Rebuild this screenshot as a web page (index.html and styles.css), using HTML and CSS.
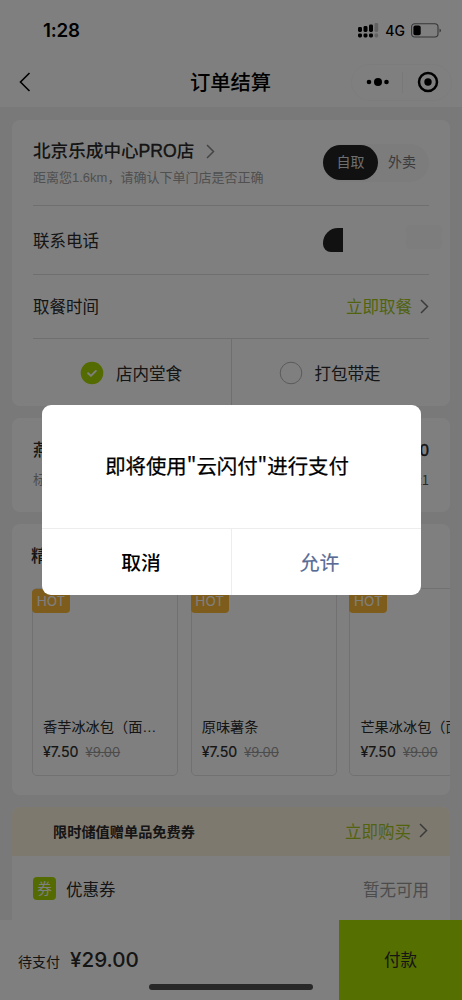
FILE: index.html
```html
<!DOCTYPE html>
<html lang="zh-CN">
<head>
<meta charset="utf-8">
<title>订单结算</title>
<link rel="stylesheet" href="styles.css">
</head>
<body>
<div class="screen">
  <header class="top">
    <div class="status">
      <span class="time">1:28</span>
      <div class="status-right">
        <svg class="signal" width="21" height="15" viewBox="0 0 21 15">
          <g fill="#000"><rect x="0" y="4" width="4" height="5" rx="1.4"/><rect x="5.5" y="3" width="4" height="6" rx="1.4"/><rect x="11" y="1.5" width="4" height="7.5" rx="1.4"/><rect x="0" y="10.5" width="4" height="4" rx="1.4"/><rect x="5.5" y="10.5" width="4" height="4" rx="1.4"/><rect x="11" y="10.5" width="4" height="4" rx="1.4"/></g>
          <g fill="#c4c4c4"><rect x="16.5" y="0" width="3.7" height="9" rx="1.4"/><rect x="16.5" y="10.5" width="3.7" height="4" rx="1.4"/></g>
        </svg>
        <span class="net">4G</span>
        <svg width="31" height="15" viewBox="0 0 31 15"><rect x=".6" y=".8" width="26.4" height="13.2" rx="3.2" fill="none" stroke="#6c6c6c" stroke-width="1.1"/><rect x="2.4" y="2.6" width="7.3" height="9.7" rx="1.8" fill="#000"/><path d="M28.5 5.5q1.4.6 1.4 2t-1.4 2z" fill="#6c6c6c"/></svg>
      </div>
    </div>
    <div class="nav">
      <svg class="back" width="12" height="20" viewBox="0 0 12 20"><path d="M10.5 1 1.5 10l9 9" fill="none" stroke="#000" stroke-width="1.6"/></svg>
      <h1>订单结算</h1>
      <div class="capsule">
        <svg width="24" height="10" viewBox="0 0 24 10"><circle cx="3" cy="5" r="2.3"/><circle cx="12" cy="5" r="4"/><circle cx="20.5" cy="5" r="2.3"/></svg>
        <i></i>
        <svg width="22" height="22" viewBox="0 0 22 22"><circle cx="11" cy="11" r="9" fill="none" stroke="#000" stroke-width="2.5"/><circle cx="11" cy="11" r="3.7"/></svg>
      </div>
    </div>
  </header>

  <main class="list">
    <section class="card order">
      <div class="row store">
        <div>
          <div class="store-name"><span>北京乐成中心<b>PRO</b>店</span><svg width="9" height="15" viewBox="0 0 9 15"><path d="m1 1 6.5 6.5L1 14" fill="none" stroke="#888" stroke-width="1.5"/></svg></div>
          <div class="distance">距离您1.6km，请确认下单门店是否正确</div>
        </div>
        <div class="switch"><span class="on">自取</span><span>外卖</span></div>
      </div>
      <div class="row phone"><span>联系电话</span><div class="masked"><b></b><i></i></div></div>
      <div class="row pickup"><span>取餐时间</span><span class="link">立即取餐<svg width="9" height="15" viewBox="0 0 9 15"><path d="m1 1 6.5 6.5L1 14" fill="none" stroke="#777" stroke-width="1.5"/></svg></span></div>
      <div class="modes">
        <div><svg width="24" height="24" viewBox="0 0 24 24"><circle cx="12" cy="12" r="11.3" fill="#a6d603"/><path d="m8.1 12.2 2.8 2.7 5-5" fill="none" stroke="#fff" stroke-width="1.9" stroke-linecap="round" stroke-linejoin="round"/></svg>店内堂食</div>
        <div><svg width="24" height="24" viewBox="0 0 24 24"><circle cx="12" cy="12" r="10.8" fill="none" stroke="#b4b4b4" stroke-width="1"/></svg>打包带走</div>
      </div>
    </section>

    <section class="card item">
      <div class="item-line"><b>燕麦拿铁</b><b>¥29.00</b></div>
      <div class="item-line sub"><span>标准</span><span class="qty">x1</span></div>
    </section>

    <section class="card picks">
      <h2>精选推荐</h2>
      <div class="goods">
        <article><em>HOT</em><p class="name">香芋冰冰包（面包）</p><p class="price">¥7.50<s>¥9.00</s></p></article>
        <article><em>HOT</em><p class="name">原味薯条</p><p class="price">¥7.50<s>¥9.00</s></p></article>
        <article><em>HOT</em><p class="name">芒果冰冰包（面包）</p><p class="price">¥7.50<s>¥9.00</s></p></article>
      </div>
    </section>

    <section class="card coupons">
      <div class="promo"><b>限时储值赠单品免费券</b><span class="link">立即购买<svg width="9" height="15" viewBox="0 0 9 15"><path d="m1 1 6.5 6.5L1 14" fill="none" stroke="#777" stroke-width="1.5"/></svg></span></div>
      <div class="coupon"><span class="tag">券</span><span>优惠券</span><span class="none">暂无可用</span></div>
    </section>
  </main>

  <footer class="bar">
    <div class="total"><span>待支付</span><strong>¥29.00</strong></div>
    <div class="pay">付款</div>
  </footer>
  <div class="home"></div>

  <div class="mask">
    <div class="dialog">
      <div class="message">即将使用"云闪付"进行支付</div>
      <div class="actions"><span>取消</span><span class="allow">允许</span></div>
    </div>
  </div>
</div>
</body>
</html>
```
FILE: styles.css
```css
* { box-sizing: border-box; margin: 0; padding: 0; }
body { font-family: "Liberation Sans", "Noto Sans CJK SC", sans-serif; color: #2a2a2a; }
svg { display: block; flex: none; }
i, em { font-style: normal; }
.screen { position: relative; width: 462px; height: 1000px; overflow: hidden; background: #f3f3f4; display: flex; flex-direction: column; white-space: nowrap; }

.top { height: 107px; flex: none; background: #fff; color: #000; }
.status { height: 57px; padding: 4px 20px 0 43px; display: flex; align-items: center; justify-content: space-between; }
.time { font: 600 18.8px/24px Inter, sans-serif; letter-spacing: -.2px; }
.status-right { display: flex; align-items: center; }
.net { font: 500 14px/18px Inter, sans-serif; margin: 0 6px 0 6px; }
.nav { height: 50px; display: grid; grid-template-columns: 1fr auto 1fr; align-items: center; }
.back { margin-left: 19px; }
.nav h1 { font-size: 20.3px; font-weight: 500; line-height: 28px; padding-top: 2px; margin-left: -1px; }
.capsule { justify-self: end; margin-right: 10px; width: 101px; height: 37px; border: 1px solid #f9f9f9; border-radius: 19px; display: flex; align-items: center; padding-left: 14px; }
.capsule i { width: 1px; height: 21px; background: #f0f0f0; margin: 0 14px 0 12px; }

.list { flex: 1; min-height: 0; overflow: hidden; padding: 13px 12px 0; display: flex; flex-direction: column; gap: 12px; }
.card { background: #fff; border-radius: 8px; flex: none; overflow: hidden; }

.order { height: 286px; padding: 0 21px; font-size: 16.5px; }
.row { display: flex; align-items: center; justify-content: space-between; border-bottom: 1px solid #dedede; }
.store { height: 86px; }
.store-name { display: flex; align-items: center; gap: 12px; font-size: 17.6px; font-weight: 500; line-height: 26px; padding-top: 1px; }
.store-name b { font-weight: 400; -webkit-text-stroke: .4px #222; }
.distance { font-size: 13px; line-height: 20px; margin-top: 4px; color: #a0a0a0; }
.switch { width: 106px; height: 38px; border-radius: 19px; background: #f8f8f8; display: flex; align-items: center; font-size: 14px; color: #777; }
.switch span { width: 48px; line-height: 35px; text-align: center; }
.switch .on { width: 55px; height: 35px; border-radius: 18px; background: #222; color: #ddd; }
.phone { height: 69px; }
.masked { width: 119px; display: flex; justify-content: space-between; margin-right: -13px; }
.masked b { width: 20px; height: 24px; background: #222; border-radius: 15px 0 0 8px; }
.masked i { width: 36px; height: 24px; margin-top: -3px; background: #fbfbfb; border-radius: 4px; }
.pickup { height: 64px; }
.pickup span { padding-bottom: 2px; }
.pickup svg { margin-top: 2px; }
.link { display: flex; align-items: center; gap: 8px; color: #a3c61a; font-size: 16.5px; }
.modes { height: 67px; display: flex; }
.modes div { flex: 1; display: flex; align-items: center; gap: 12px; padding-left: 47px; }
.modes div + div { border-left: 1px solid #dedede; }

.item { height: 94px; padding: 20px 21px 0; }
.item-line { display: flex; justify-content: space-between; font-size: 16.5px; line-height: 24px; }
.item-line b { font-weight: 500; }
.item-line b + b { -webkit-text-stroke: .4px #222; }
.item-line.sub { font-size: 13px; line-height: 20px; margin-top: 8px; color: #999; }
.qty { color: #555; font-family: "Noto Sans CJK SC", sans-serif; }

.picks { height: 271px; padding: 20px 0 0 20px; }
.picks h2 { font-size: 17px; line-height: 26px; font-weight: 500; margin-left: -1px; }
.goods { display: flex; gap: 12.7px; margin-top: 18px; }
.goods article { width: 146px; height: 188px; border: 1px solid #e2e2e2; border-radius: 5px; flex: none; display: flex; flex-direction: column; padding-left: 10px; }
.goods em { align-self: flex-start; width: 38px; height: 24px; margin-left: -11px; border-radius: 4px; background: #fcba38; color: #fff; text-align: center; font: 400 13.5px/25px Inter, sans-serif; }
.name { width: 116px; margin-top: 104px; font-size: 14.2px; line-height: 20px; overflow: hidden; text-overflow: ellipsis; }
.price { font: 400 14.2px/20px Inter, sans-serif; margin-top: 5px; -webkit-text-stroke: .2px #2a2a2a; }
.price s { font-size: 13px; color: #999; margin-left: 7px; -webkit-text-stroke: 0; }

.coupons { height: 140px; }
.promo { height: 49px; padding: 0 22px 2px 41px; display: flex; align-items: center; justify-content: space-between; background: #fdf2de; }
.promo b { font-size: 14.2px; font-weight: 700; }
.coupon { height: 65px; padding: 0 21px; display: flex; align-items: center; font-size: 16.5px; }
.tag { width: 23px; height: 23px; border-radius: 4px; margin-right: 10px; background: #a6d603; color: #fff; text-align: center; font-size: 14.5px; line-height: 24px; }
.none { margin-left: auto; color: #999; }

.bar { height: 80px; flex: none; display: flex; background: #fff; }
.total { flex: 1; display: flex; align-items: baseline; padding: 27px 0 0 18px; }
.total span { font-size: 14px; }
.total strong { font: 500 20.6px/26px Inter, sans-serif; margin-left: 10px; }
.pay { width: 123px; height: 80px; background: #aade00; font-size: 16.5px; line-height: 80px; text-align: center; }
.home { position: absolute; left: 149px; top: 984px; width: 164px; height: 6px; border-radius: 3px; background: #505050; }

.mask { position: absolute; inset: 0; background: rgba(0, 0, 0, .5); display: flex; align-items: center; justify-content: center; }
.dialog { width: 379px; height: 190px; border-radius: 9px; background: #fff; overflow: hidden; color: #000; }
.message { height: 124px; border-bottom: 1px solid #ededed; text-align: center; font-family: "Noto Sans CJK SC", sans-serif; font-size: 20.4px; font-weight: 400; line-height: 121px; padding-right: 8px; -webkit-text-stroke: .25px #000; }
.actions { height: 66px; display: flex; font-size: 19.8px; font-weight: 500; line-height: 68px; text-align: center; }
.actions span { width: 190px; border-right: 1px solid #ededed; padding-left: 10px; }
.actions .allow { width: 189px; border: 0; padding-right: 13px; color: #576b95; padding-left: 0; font-weight: 400; -webkit-text-stroke: .2px #576b95; }
```
